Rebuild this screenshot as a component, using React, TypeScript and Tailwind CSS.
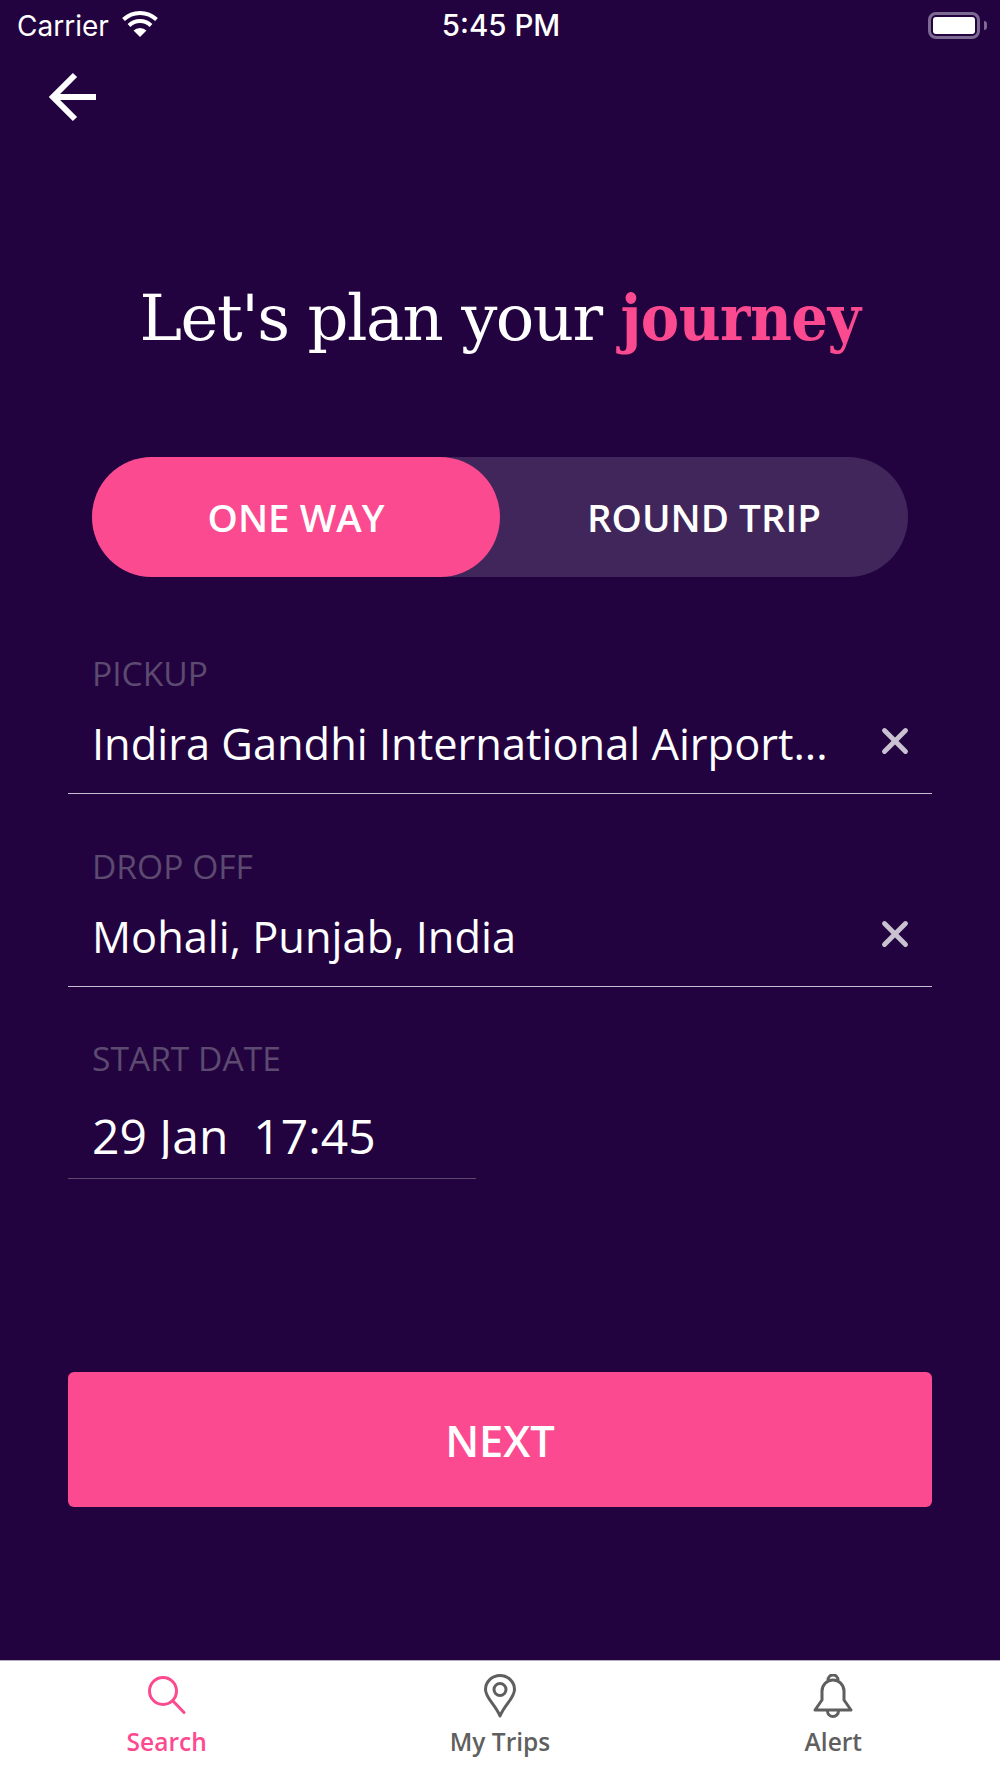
import React from 'react';
import { X } from 'lucide-react';

const sans = "font-['Open_Sans',sans-serif]";

const Field: React.FC<{ label: string; value: string }> = ({ label, value }) => (
    <div className="border-b border-[#c5bdd0] h-[170px] flex flex-col pt-[27px] pl-[24px]">
        <div className="text-[33.6px] leading-[44px] text-[#5c4a70]">{label}</div>
        <div className="flex items-center justify-between pr-[16px] mt-[19px]">
            <div className="text-[43.4px] leading-[60px] text-white whitespace-nowrap">{value}</div>
            <X className="w-[42px] h-[42px] text-[#c9c2d1] mb-[6px]" strokeWidth={2.8} />
        </div>
    </div>
);

const App: React.FC = () => {
    return (
        <div className={`w-[1000px] h-[1778px] bg-[#22033f] flex flex-col overflow-hidden ${sans}`}>
            {/* status bar */}
            <div className="h-[50px] flex items-center justify-between pl-[17px] pr-[13px] pt-[2px] text-white font-['Inter',sans-serif]">
                <div className="flex items-center gap-[12px] w-[300px]">
                    <span className="text-[28px] leading-none">Carrier</span>
                    <svg width="38" height="28" viewBox="0 0 38 28" className="mb-[5px]">
                        <path d="M19 27 L12.5 20.500 a9.500 9.500 0 0 1 13 0 Z" fill="white" />
                        <path d="M8 15.500 a16 16 0 0 1 22 0" fill="none" stroke="white" strokeWidth="4" />
                        <path d="M2.500 9.500 a24 24 0 0 1 33 0" fill="none" stroke="white" strokeWidth="4" />
                    </svg>
                </div>
                <span className="text-[29.5px] leading-none font-medium -ml-[2px]">5:45 PM</span>
                <div className="w-[300px] flex justify-end items-center -mt-[2px]">
                    <div className="w-[52px] h-[27px] rounded-[8px] border-[3px] border-[#7d6a92] p-[2px]">
                        <div className="w-full h-full rounded-[3px] bg-white" />
                    </div>
                    <div className="w-[3px] h-[9px] bg-[#7d6a92] ml-[4px] rounded-r-sm" />
                </div>
            </div>

            {/* back */}
            <div className="pl-[46px] pt-[22px] h-[74px]">
                <svg width="52" height="50" viewBox="0 0 52 50" fill="none" stroke="white" strokeWidth="6">
                    <path d="M29 3 L7 25 L29 47" />
                    <path d="M7 25 H50" />
                </svg>
            </div>

            <h1 className="mt-[142px] h-[103px] text-center text-[64px] leading-[104px] text-white font-['DejaVu_Serif',serif] font-light whitespace-nowrap tracking-[-1.5px]">
                Let's plan your <span className="font-bold [font-stretch:condensed] tracking-[-0.5px] text-[#fb4a8f]">journey</span>
            </h1>

            {/* trip type */}
            <div className="mt-[88px] mx-[92px] h-[120px] rounded-[60px] bg-[#40265b] flex text-[38.600px] font-semibold text-white">
                <div className="w-[408px] rounded-[60px] bg-[#fb4a8f] flex items-center justify-center pt-[2px]">ONE WAY</div>
                <div className="w-[408px] flex items-center justify-center pt-[2px]">ROUND TRIP</div>
            </div>

            {/* fields */}
            <div className="mt-[47px] mx-[68px] flex flex-col gap-[22.5px]">
                <Field label="PICKUP" value="Indira Gandhi International Airport..." />
                <Field label="DROP OFF" value="Mohali, Punjab, India" />
                <div className="border-b border-[#5c4a70] w-[408px] h-[170px] flex flex-col pt-[27px] pl-[24px]">
                    <div className="text-[33.6px] leading-[44px] text-[#5c4a70]">START DATE</div>
                    <div className="mt-[25px] h-[54px] overflow-hidden text-[48px] leading-[62px] text-white whitespace-pre">29 Jan  17:45</div>
                </div>
            </div>

            <button className="mt-[193px] mx-[68px] h-[135px] rounded-[6px] bg-[#fb4a8f] text-white text-[43.400px] font-semibold pt-[2px]">NEXT</button>

            {/* tab bar */}
            <div className="mt-auto h-[118px] bg-white grid grid-cols-3 border-t border-[#b5adbd]">
                <div className="flex flex-col items-center pt-[13px] text-[#fb4a8f]">
                    <svg width="40" height="44" viewBox="0 0 40 44" fill="none" stroke="currentColor" strokeWidth="3">
                        <circle cx="16" cy="17" r="13.500" />
                        <path d="M26 27 L37 38.500" strokeLinecap="round" />
                    </svg>
                    <span className="text-[24.500px] leading-[34px] font-semibold mt-[7px]">Search</span>
                </div>
                <div className="flex flex-col items-center pt-[13px] text-[#5f5f5f]">
                    <svg width="34" height="44" viewBox="0 0 34 44" fill="none" stroke="currentColor" strokeWidth="3">
                        <path d="M17 42 C12 30 2.500 24 2.500 15.500 a14.500 14 0 0 1 29 0 C31.500 24 22 30 17 42 Z" strokeLinejoin="round" />
                        <circle cx="17" cy="15.500" r="6" />
                    </svg>
                    <span className="text-[24.500px] leading-[34px] font-semibold mt-[7px]">My Trips</span>
                </div>
                <div className="flex flex-col items-center pt-[13px] text-[#5f5f5f]">
                    <svg width="40" height="44" viewBox="0 0 40 44" fill="none" stroke="currentColor" strokeWidth="3">
                        <path d="M9 26 V17 a11 11 0 0 1 22 0 V26 L38 36 H2 L9 26 Z" strokeLinejoin="round" />
                        <path d="M15 6 a5 5 0 0 1 10 0" />
                        <path d="M14.500 37 a5.500 5.500 0 0 0 11 0" />
                    </svg>
                    <span className="text-[24.500px] leading-[34px] font-semibold mt-[7px]">Alert</span>
                </div>
            </div>
        </div>
    );
};

export default App;
